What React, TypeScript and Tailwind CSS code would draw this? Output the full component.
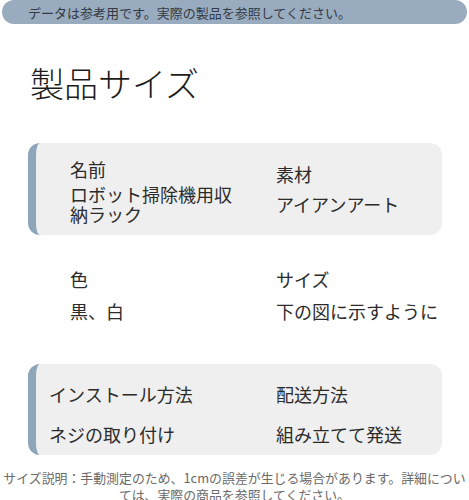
import React from "react";

const font = { fontFamily: '"Noto Sans CJK JP", "Noto Sans", sans-serif' };

export default function App() {
  return (
    <div className="w-[469px] h-[500px] overflow-hidden bg-white text-[#2b2b2b]" style={font}>
      <div className="mx-[2px] h-[24px] rounded-full bg-[#99abbf] pl-[26px] pt-[2px] text-[13px] leading-[22px] text-[#333a44]">
        データは参考用です。実際の製品を参照してください。
      </div>

      <h1 className="mt-[39px] ml-[30px] text-[34px] leading-[40px] font-light text-[#1c1c1c]">
        製品サイズ
      </h1>

      <div className="mt-[40px] ml-[28px] w-[414px] h-[92px] flex rounded-[12px] border-l-[8px] border-[#8fa5b9] bg-[#efefef]">
        <div className="w-[240px] pl-[34px] pr-[40px] pt-[16px] text-[18px] leading-[20px]">
          <div>名前</div>
          <div className="mt-[5px]">ロボット掃除機用収納ラック</div>
        </div>
        <div className="flex flex-col justify-center gap-[10px] text-[18px] leading-[20px]">
          <div>素材</div>
          <div>アイアンアート</div>
        </div>
      </div>

      <div className="mt-[34px] flex text-[18px] leading-[20px]">
        <div className="w-[276px] pl-[70px] flex flex-col gap-[12px]">
          <div>色</div>
          <div>黒、白</div>
        </div>
        <div className="flex flex-col gap-[12px]">
          <div>サイズ</div>
          <div>下の図に示すように</div>
        </div>
      </div>

      <div className="mt-[43px] ml-[28px] w-[414px] h-[91px] flex rounded-[12px] border-l-[8px] border-[#8fa5b9] bg-[#efefef] text-[18px] leading-[20px]">
        <div className="w-[240px] pl-[13px] pt-[20px] flex flex-col gap-[20px]">
          <div>インストール方法</div>
          <div>ネジの取り付け</div>
        </div>
        <div className="pt-[20px] flex flex-col gap-[20px]">
          <div>配送方法</div>
          <div>組み立てて発送</div>
        </div>
      </div>

      <div className="mt-[14px] text-center text-[12.9px] leading-[17px] text-[#6a6a6a] whitespace-nowrap">
        サイズ説明：手動測定のため、1cmの誤差が生じる場合があります。詳細につい
        <br />
        ては、実際の商品を参照してください。
      </div>
    </div>
  );
}
